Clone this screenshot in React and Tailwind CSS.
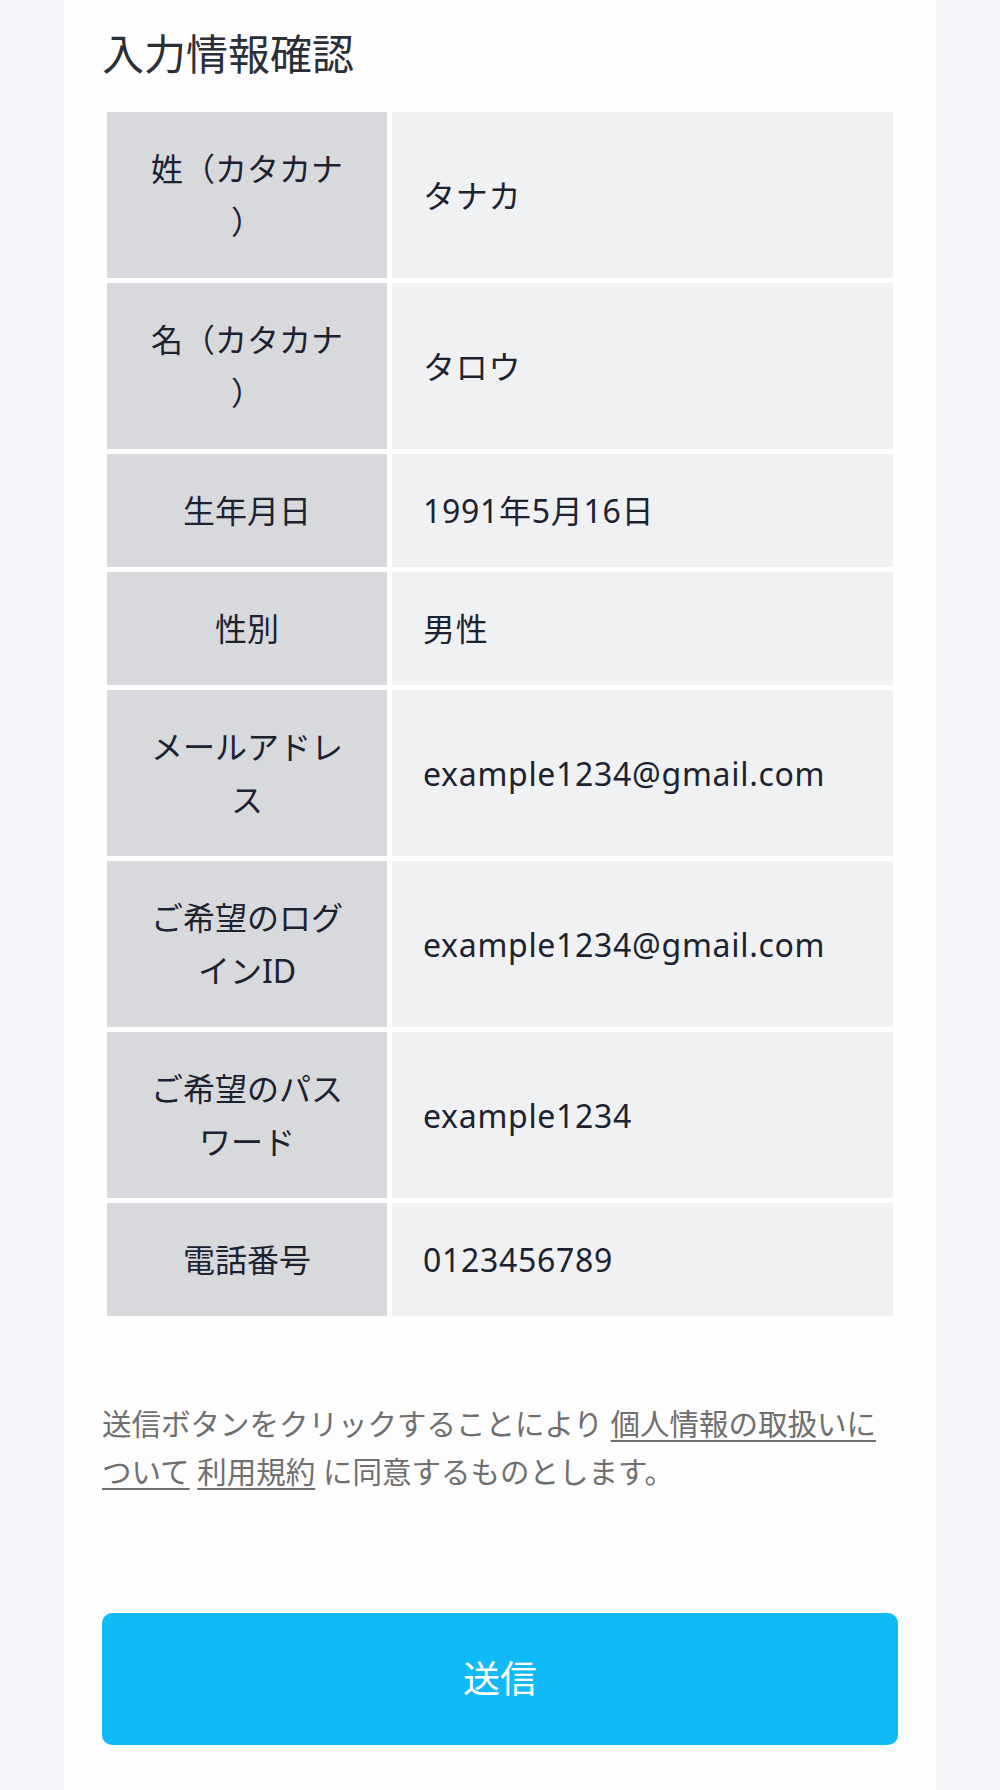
const rows = [
  { label: '姓（カタカナ）', value: 'タナカ' },
  { label: '名（カタカナ）', value: 'タロウ' },
  { label: '生年月日', value: '1991年5月16日' },
  { label: '性別', value: '男性' },
  { label: 'メールアドレス', value: 'example1234@gmail.com' },
  { label: 'ご希望のログインID', value: 'example1234@gmail.com' },
  { label: 'ご希望のパスワード', value: 'example1234' },
  { label: '電話番号', value: '0123456789' },
];

export default function App() {
  return (
    <div
      className="min-h-screen bg-[#f6f7fb] px-[64px]"
      style={{ fontFamily: '"Noto Sans", "Noto Sans CJK JP", sans-serif' }}
    >
      <div className="min-h-[1790px] bg-[#fdfdfd] px-[38px] pt-[22px]">
        <h2 className="text-[42px] leading-[64px] text-[#2b2f37] mb-[21px]">入力情報確認</h2>

        <table className="w-[796px] table-fixed border-separate border-spacing-[5px] bg-white">
          <tbody>
            {rows.map((row, i) => (
              <tr key={i}>
                <td className="w-[280px] bg-[#d8d9dc] px-[38px] py-[30px] text-center align-middle text-[32px] leading-[53px] text-[#1c2230] [line-break:anywhere] [text-spacing-trim:space-all]">
                  {row.label}
                </td>
                <td className="bg-[#f0f1f3] pl-[31px] pr-[20px] py-[30px] align-middle text-[32px] leading-[53px] tracking-[0.7px] text-[#1c2230]">
                  {row.value}
                </td>
              </tr>
            ))}
          </tbody>
        </table>

        <p className="mt-[79px] text-[29.5px] leading-[48px] text-[#6f6f6f]">
          送信ボタンをクリックすることにより{' '}
          <a href="#" className="underline decoration-2 underline-offset-[5px]">個人情報の取扱いについて</a>{' '}
          <a href="#" className="underline decoration-2 underline-offset-[5px]">利用規約</a>{' '}
          に同意するものとします。
        </p>

        <button className="mt-[117px] w-[796px] h-[132px] rounded-[10px] bg-[#10baf6] text-white text-[37px]">
          送信
        </button>
      </div>
    </div>
  );
}
